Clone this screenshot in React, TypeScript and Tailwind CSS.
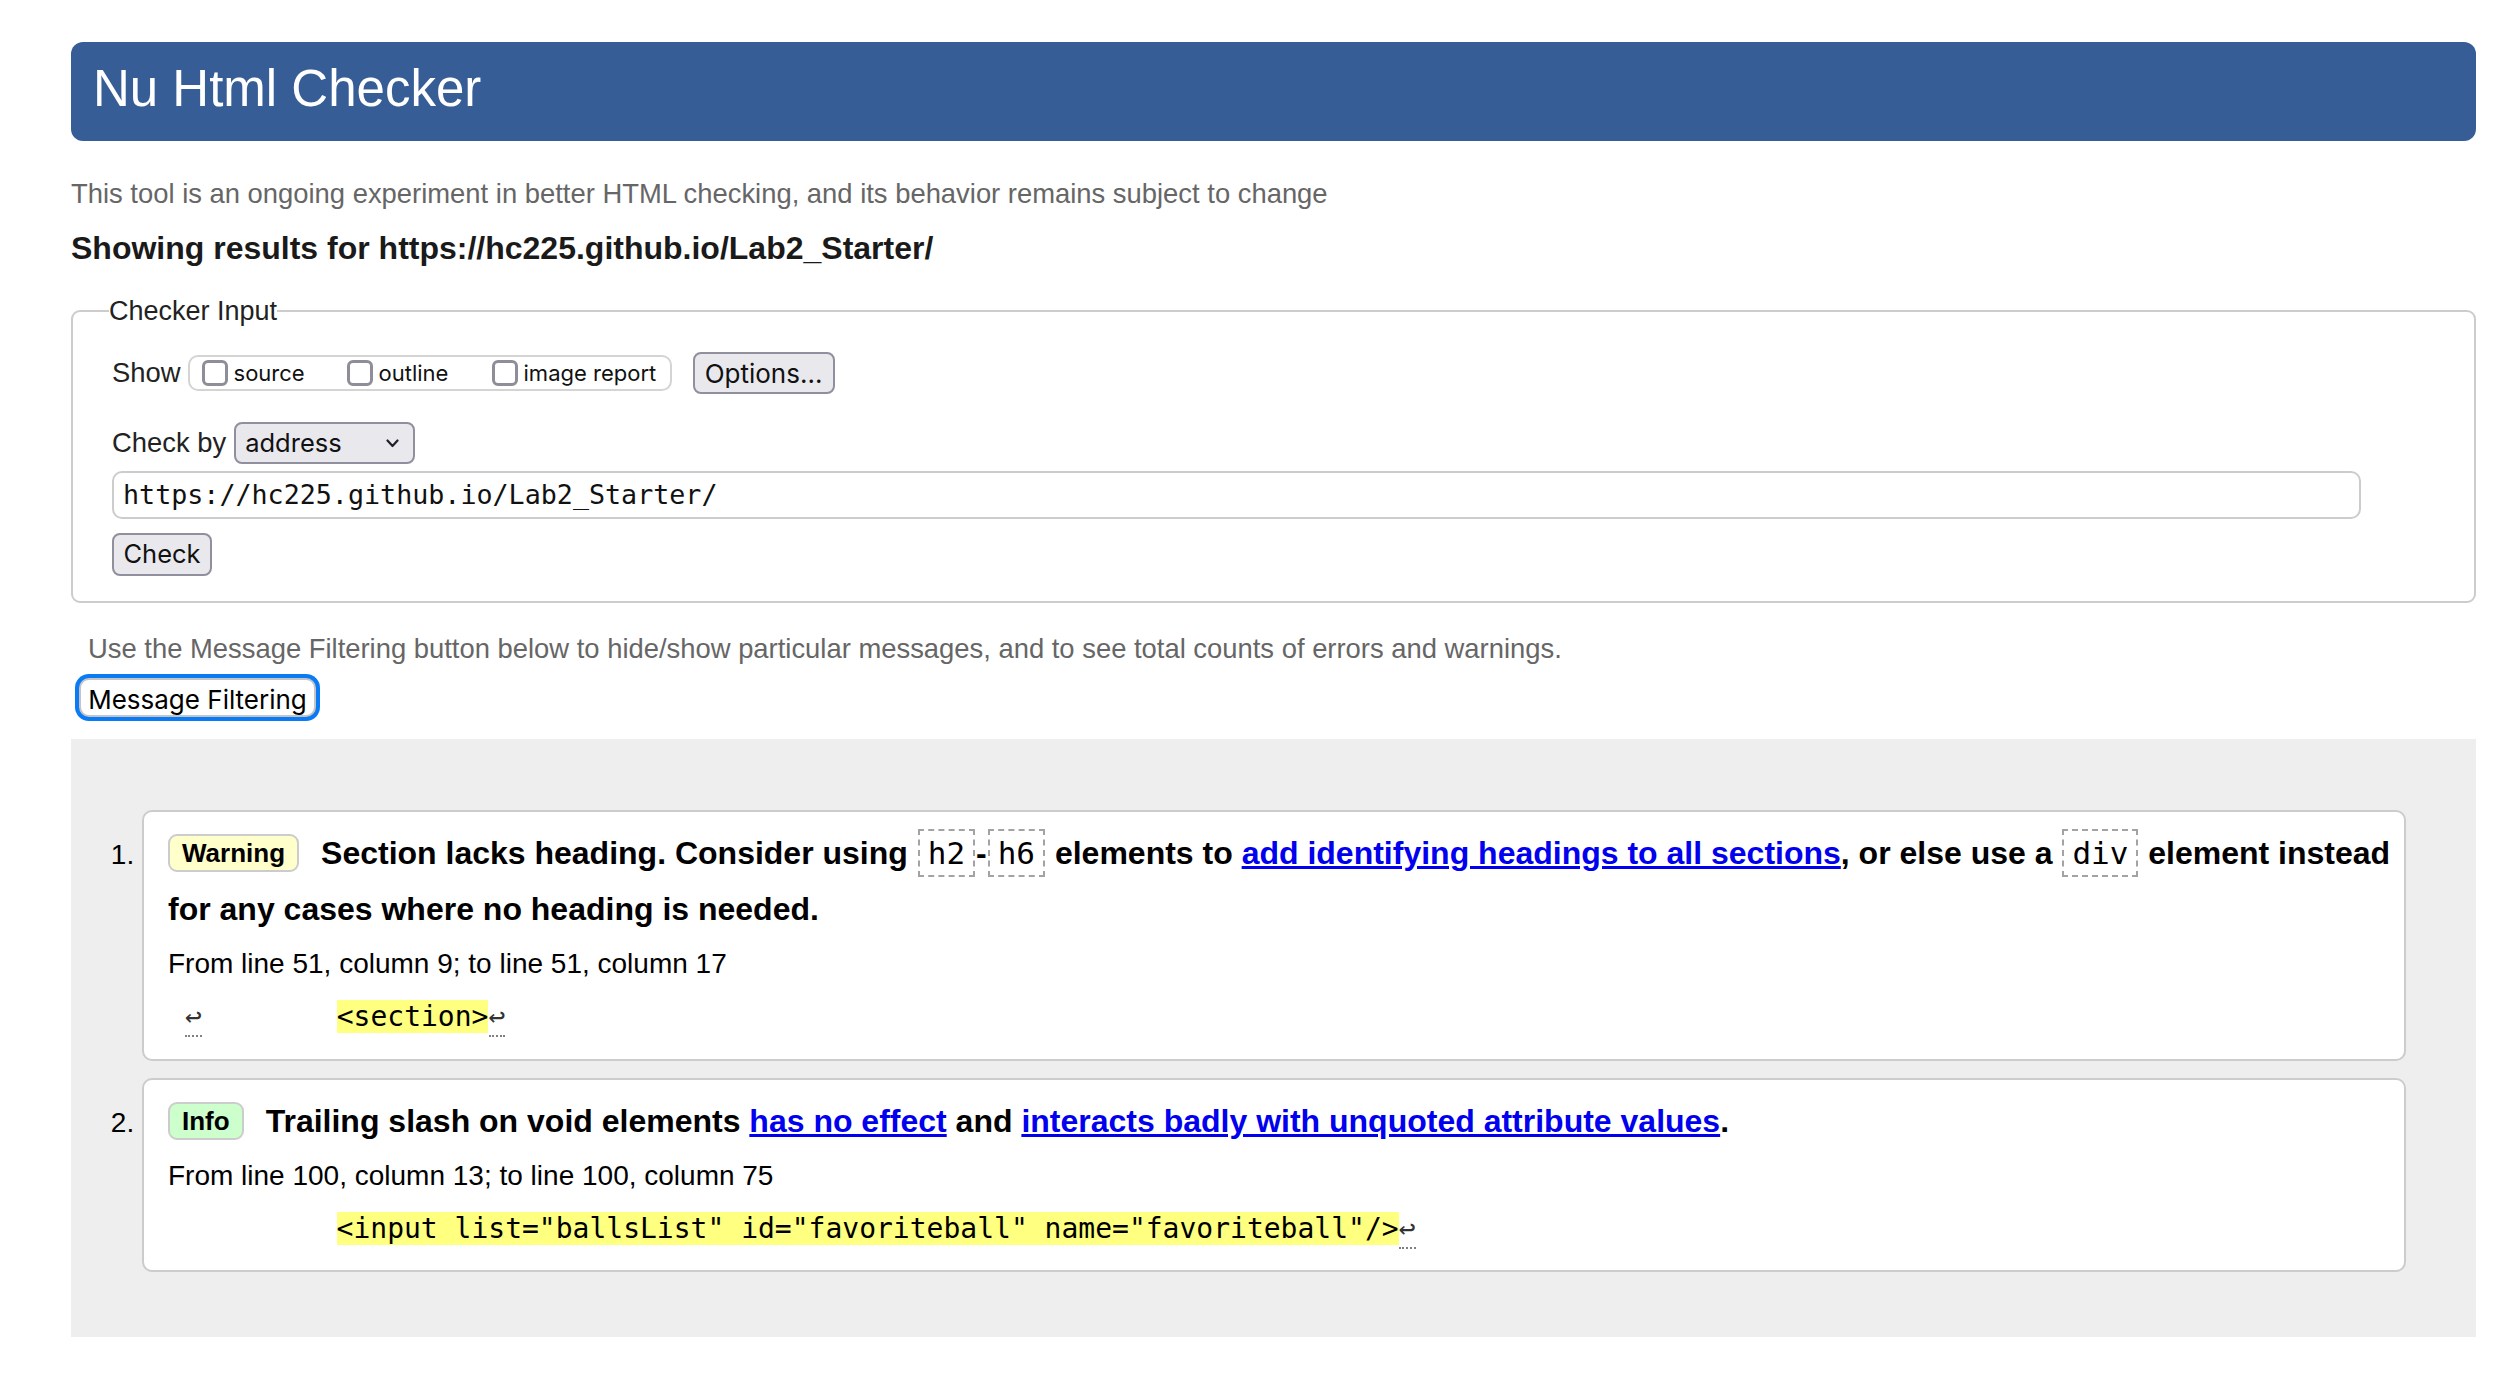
import React from 'react';

const mono = "font-['DejaVu_Sans_Mono',monospace]";

const Code = ({ children }: { children: React.ReactNode }) => (
  <code className="mx-[1px] border-2 border-dashed border-[#a3a3a3] px-[8px] py-[4px] font-['DejaVu_Sans_Mono',monospace] text-[31px] font-normal">
    {children}
  </code>
);

const LineBreak = () => (
  <span className="inline-block w-[17px] text-center">
    <span className="border-b-2 border-dotted border-[#808080] pb-[2px] text-[28px] text-[#333]">↩</span>
  </span>
);

const Badge = ({ label, tone }: { label: string; tone: 'warning' | 'info' }) => (
  <span
    className={
      tone === 'warning'
        ? 'mr-[22px] inline-block rounded-[9px] border-2 border-[#cccccc] bg-[#ffffcc] px-[12px] align-[2px] text-[26px] leading-[34px] font-bold'
        : 'mr-[22px] inline-block rounded-[9px] border-2 border-[#cccccc] bg-[#ccffcc] px-[12px] align-[2px] text-[26px] leading-[34px] font-bold'
    }
  >
    {label}
  </span>
);

const Link = ({ children }: { children: React.ReactNode }) => (
  <a href="#" className="text-[#0000ee] underline">
    {children}
  </a>
);

const Checkbox = ({ label, width }: { label: string; width: string }) => (
  <label className={`flex items-center ${width}`}>
    <input type="checkbox" className="h-[26px] w-[26px] appearance-none rounded-[6px] border-[3px] border-[#8e8e99] bg-white" />
    <span className="ml-[6px] font-['Inter',sans-serif] text-[22px] text-[#111]">{label}</span>
  </label>
);

const App: React.FC = () => {
  return (
    <div className="min-h-screen bg-white pl-[71px] pr-[44px] pt-[42px] font-['Liberation_Sans',Arial,sans-serif] text-black">
      <h1 className="h-[99px] rounded-[12px] bg-[#365d95] pb-[6px] pl-[22px] text-[51px] leading-[93px] text-white">
        Nu Html Checker
      </h1>

      <p className="mt-[36px] text-[27.4px] leading-[34px] text-[#666]">
        This tool is an ongoing experiment in better HTML checking, and its behavior remains subject to change
      </p>
      <p className="mt-[17px] text-[32px] leading-[40px] font-bold text-[#1a1a1a]">
        Showing results for https://hc225.github.io/Lab2_Starter/
      </p>

      <fieldset className="mt-[27px] rounded-[9px] border-2 border-[#cccccc] pb-[25px] pl-[39px] pt-[25px] text-[27.4px] text-[#222]">
        <legend className="-ml-[3px] px-0 text-[27px] leading-[32px]">Checker Input</legend>

        <div className="flex h-[42px] items-center">
          <span>Show</span>
          <div className="ml-[7px] flex h-[36px] w-[484px] items-center rounded-[10px] border-2 border-[#d4d4d4] pl-[12px]">
            <Checkbox label="source" width="w-[145px]" />
            <Checkbox label="outline" width="w-[145px]" />
            <Checkbox label="image report" width="w-[167px]" />
          </div>
          <button className="ml-[21px] h-[42px] w-[142px] rounded-[8px] border-2 border-[#8f8f9d] bg-[#e9e9ed] font-['Inter',sans-serif] text-[26px] text-[#111]">
            Options...
          </button>
        </div>

        <div className="mt-[28px] flex h-[42px] items-center">
          <span>Check by</span>
          <button className="ml-[8px] flex h-[42px] w-[181px] items-center justify-between rounded-[8px] border-2 border-[#8f8f9d] bg-[#e9e9ed] pl-[9px] pr-[14px] font-['Inter',sans-serif] text-[25.5px] text-[#111]">
            <span>address</span>
            <svg width="13" height="9" viewBox="0 0 13 9" fill="none" stroke="#222" strokeWidth="2.2" strokeLinecap="round" strokeLinejoin="round">
              <path d="M1.5 1.5 L6.5 7 L11.5 1.5" />
            </svg>
          </button>
        </div>

        <div className="mt-[7px] flex h-[48px] w-[2249px] items-center rounded-[10px] border-2 border-[#cccccc] bg-white pl-[9px]">
          <span className={`${mono} text-[26.7px] text-[#111]`}>https://hc225.github.io/Lab2_Starter/</span>
        </div>

        <button className="mt-[14px] h-[43px] w-[100px] rounded-[8px] border-2 border-[#8f8f9d] bg-[#e9e9ed] font-['Inter',sans-serif] text-[25.5px] text-[#111]">
          Check
        </button>
      </fieldset>

      <p className="ml-[17px] mt-[29px] text-[27.4px] leading-[34px] text-[#666]">
        Use the Message Filtering button below to hide/show particular messages, and to see total counts of errors and warnings.
      </p>
      <button className="ml-[8px] mt-[12px] h-[39px] w-[237px] rounded-[10px] border-2 border-[#c4c4c4] bg-white font-['Inter',sans-serif] text-[26px] text-black ring-4 ring-[#0b7bf5]">
        Message Filtering
      </button>

      <div className="mt-[22px] bg-[#eeeeee] pb-[65px] pl-[71px] pr-[70px] pt-[71px]">
        <ol className="flex list-decimal flex-col gap-[17px]">
          <li className="rounded-[10px] border-2 border-[#cccccc] bg-white pb-[16px] pl-[24px] pr-[8px] pt-[13px] text-[28px] marker:text-black">
            <p className="text-[32px] leading-[56px] font-bold">
              <Badge label="Warning" tone="warning" />
              Section lacks heading. Consider using <Code>h2</Code>-<Code>h6</Code> elements to{' '}
              <Link>add identifying headings to all sections</Link>, or else use a <Code>div</Code> element instead for any
              cases where no heading is needed.
            </p>
            <p className="leading-[54px]">From line 51, column 9; to line 51, column 17</p>
            <pre className={`${mono} whitespace-pre text-[28px] leading-[52px] text-black`}>
              {' '}
              <LineBreak />
              {'        '}
              <span className="bg-[#ffff80]">{'<section>'}</span>
              <LineBreak />
            </pre>
          </li>
          <li className="rounded-[10px] border-2 border-[#cccccc] bg-white pb-[15px] pl-[24px] pr-[8px] pt-[13px] text-[28px] marker:text-black">
            <p className="text-[32px] leading-[56px] font-bold">
              <Badge label="Info" tone="info" />
              Trailing slash on void elements <Link>has no effect</Link> and{' '}
              <Link>interacts badly with unquoted attribute values</Link>.
            </p>
            <p className="leading-[54px]">From line 100, column 13; to line 100, column 75</p>
            <pre className={`${mono} whitespace-pre text-[28px] leading-[52px] text-black`}>
              {'          '}
              <span className="bg-[#ffff80]">{'<input list="ballsList" id="favoriteball" name="favoriteball"/>'}</span>
              <LineBreak />
            </pre>
          </li>
        </ol>
      </div>
    </div>
  );
};

export default App;
